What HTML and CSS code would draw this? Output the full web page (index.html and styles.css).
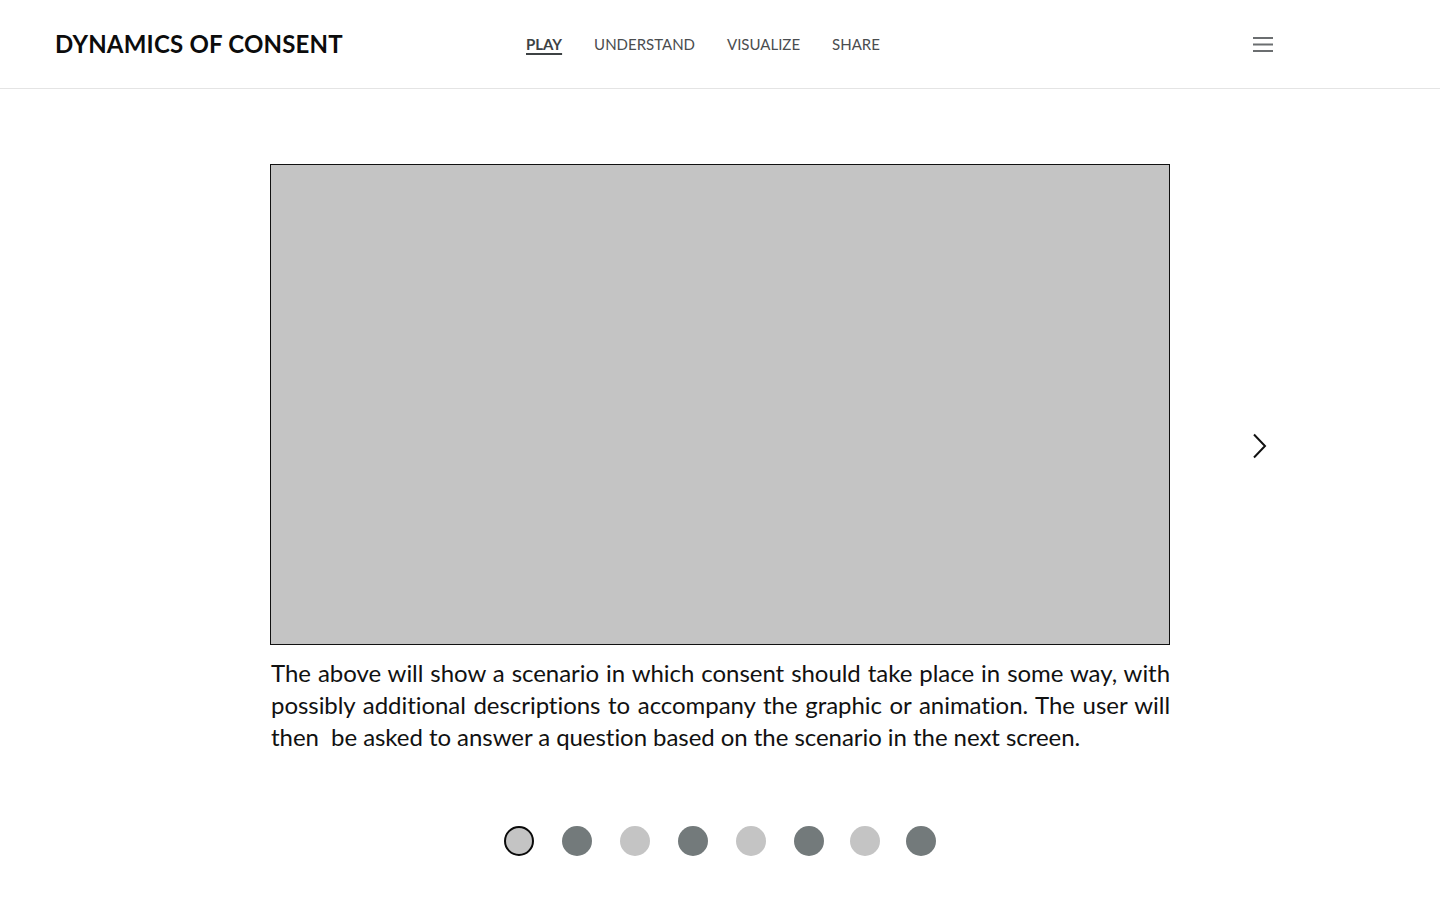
FILE: index.html
```html
<!DOCTYPE html>
<html lang="en">
<head>
<meta charset="utf-8">
<title>Dynamics of Consent</title>
<link rel="stylesheet" href="styles.css">
</head>
<body>
<header class="site-header">
  <div class="brand">DYNAMICS OF CONSENT</div>
  <nav class="main-nav">
    <a class="nav-link active" href="#">PLAY</a>
    <a class="nav-link" href="#">UNDERSTAND</a>
    <a class="nav-link" href="#">VISUALIZE</a>
    <a class="nav-link" href="#">SHARE</a>
  </nav>
  <button class="menu-btn" aria-label="Menu">
    <svg width="20" height="16" viewBox="0 0 20 16"><path d="M0 2h20M0 8.5h20M0 15h20" stroke="#6b6e70" stroke-width="2" fill="none"/></svg>
  </button>
</header>
<main class="stage">
  <div class="slide">
    <div class="scene"></div>
    <p class="caption">The above will show a scenario in which consent should take place in some way, with possibly additional descriptions to accompany the graphic or animation. The user will then  be asked to answer a question based on the scenario in the next screen.</p>
  </div>
  <div class="next-col">
    <button class="next-btn" aria-label="Next">
      <svg width="16" height="26" viewBox="0 0 16 26"><path d="M2 1.5l11 11.5-11 11.5" stroke="#111" stroke-width="2" fill="none"/></svg>
    </button>
  </div>
</main>
<div class="pager">
  <span class="dot current"></span>
  <span class="dot dark"></span>
  <span class="dot light"></span>
  <span class="dot dark"></span>
  <span class="dot light"></span>
  <span class="dot dark"></span>
  <span class="dot light narrow"></span>
  <span class="dot dark"></span>
</div>
</body>
</html>
```
FILE: styles.css
```css
* { box-sizing: border-box; }
html, body { margin: 0; padding: 0; background: #fff; }
body { font-family: Lato, "Liberation Sans", sans-serif; color: #111; }

.site-header {
  height: 89px;
  border-bottom: 1px solid #e4e4e4;
  display: flex;
  align-items: center;
  padding: 0 167px 0 55px;
}
.brand {
  flex: 0 0 471px;
  font-weight: 700;
  font-size: 24px;
  color: #0c0c0c;
  letter-spacing: 0.2px;
  margin-top: -1px;
}
.main-nav { display: flex; gap: 32px; }
.nav-link {
  font-family: Lato, sans-serif;
  font-size: 15px;
  letter-spacing: 0;
  color: #4a4d4f;
  text-decoration: none;
}
.nav-link.active {
  font-weight: 700;
  color: #3d4244;
  text-decoration: underline;
  text-underline-offset: 3px;
  text-decoration-thickness: 2px;
}
.menu-btn {
  margin-left: auto;
  background: none;
  border: 0;
  padding: 0;
  display: flex;
}

.stage {
  display: grid;
  grid-template-columns: 1fr 900px 1fr;
  margin-top: 75px;
}
.slide { grid-column: 2; }
.scene {
  height: 481px;
  background: #c4c4c4;
  border: 1px solid #111;
}
.caption {
  margin: 12px 0 0;
  font-size: 24px;
  line-height: 32px;
  color: #111;
  padding-left: 1px;
  text-align: justify;
  white-space: pre-wrap;
  letter-spacing: -0.05px;
}
.next-col {
  grid-column: 3;
  grid-row: 1;
  padding-left: 82px;
  padding-top: 269px;
}
.next-btn { background: none; border: 0; padding: 0; display: block; }

.pager {
  display: flex;
  justify-content: center;
  gap: 28px;
  margin-top: 73px;
}
.dot {
  width: 30px;
  height: 30px;
  border-radius: 50%;
  display: block;
}
.dot.dark { background: #737a7b; }
.dot.light { background: #c4c4c4; }
.dot.current { background: #c4c4c4; border: 2px solid #0a0a0a; }
.dot.narrow { margin: 0 -2px 0 -2px; }
```
